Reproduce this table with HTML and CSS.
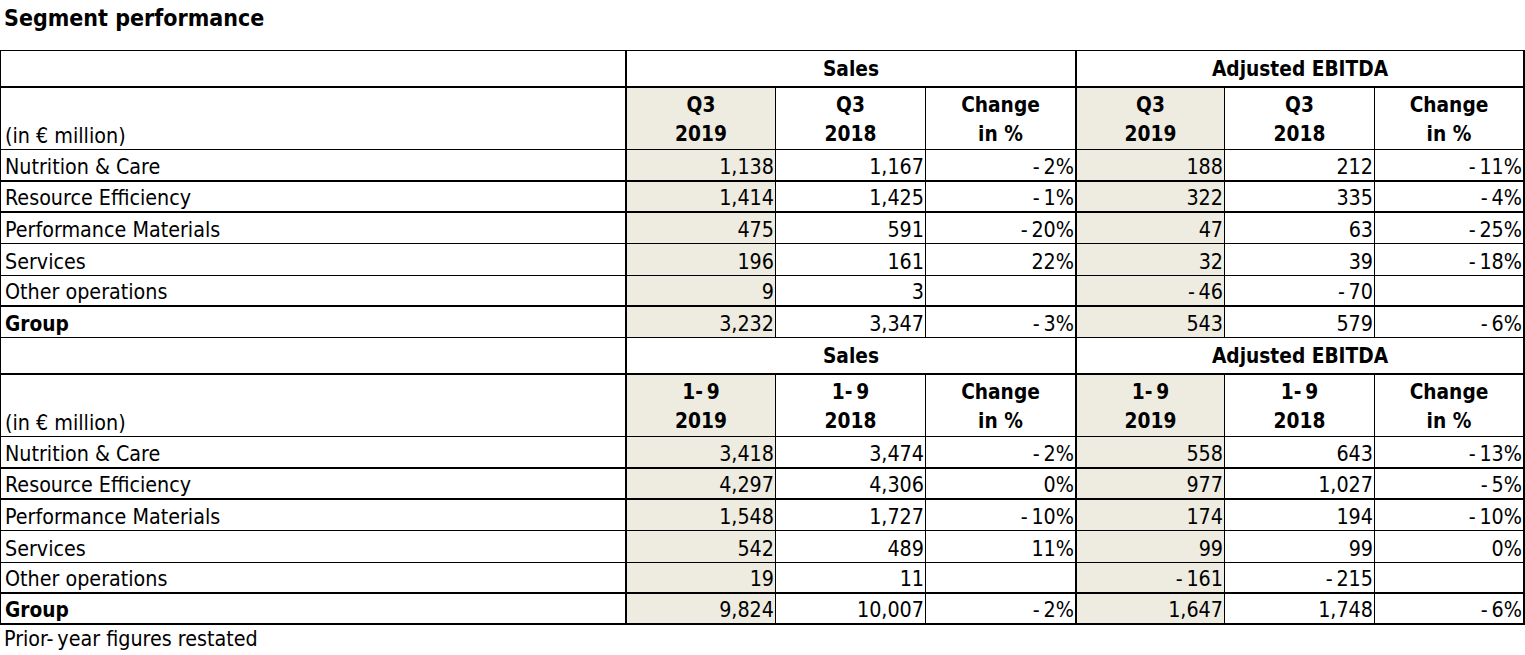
FILE: index.html
```html
<!DOCTYPE html>
<html lang="en">
<head>
<meta charset="utf-8">
<title>Segment performance</title>
<link rel="stylesheet" href="styles.css">
</head>
<body>
<h1 class="title">Segment performance</h1>
<div class="table">
  <div class="row h1 thick">
    <div class="c sep"></div>
    <div class="c sep span3 hd">Sales</div>
    <div class="c sep span3 hd">Adjusted EBITDA</div>
  </div>
  <div class="row h2">
    <div class="c sep lbl">(in € million)</div>
    <div class="c hd2 shade">Q3<br>2019</div>
    <div class="c hd2">Q3<br>2018</div>
    <div class="c sep hd2">Change<br>in %</div>
    <div class="c hd2 shade">Q3<br>2019</div>
    <div class="c hd2">Q3<br>2018</div>
    <div class="c sep hd2">Change<br>in %</div>
  </div>
  <div class="row d32 thick">
    <div class="c sep lbl">Nutrition &amp; Care</div>
    <div class="c num shade">1,138</div><div class="c num">1,167</div><div class="c sep num">-&#8201;2%</div>
    <div class="c num shade">188</div><div class="c num">212</div><div class="c sep num">-&#8201;11%</div>
  </div>
  <div class="row d thick">
    <div class="c sep lbl">Resource Efficiency</div>
    <div class="c num shade">1,414</div><div class="c num">1,425</div><div class="c sep num">-&#8201;1%</div>
    <div class="c num shade">322</div><div class="c num">335</div><div class="c sep num">-&#8201;4%</div>
  </div>
  <div class="row d">
    <div class="c sep lbl">Performance Materials</div>
    <div class="c num shade">475</div><div class="c num">591</div><div class="c sep num">-&#8201;20%</div>
    <div class="c num shade">47</div><div class="c num">63</div><div class="c sep num">-&#8201;25%</div>
  </div>
  <div class="row d32">
    <div class="c sep lbl">Services</div>
    <div class="c num shade">196</div><div class="c num">161</div><div class="c sep num">22%</div>
    <div class="c num shade">32</div><div class="c num">39</div><div class="c sep num">-&#8201;18%</div>
  </div>
  <div class="row d thick">
    <div class="c sep lbl">Other operations</div>
    <div class="c num shade">9</div><div class="c num">3</div><div class="c sep num"></div>
    <div class="c num shade">-&#8201;46</div><div class="c num">-&#8201;70</div><div class="c sep num"></div>
  </div>
  <div class="row d">
    <div class="c sep lbl strong">Group</div>
    <div class="c num shade">3,232</div><div class="c num">3,347</div><div class="c sep num">-&#8201;3%</div>
    <div class="c num shade">543</div><div class="c num">579</div><div class="c sep num">-&#8201;6%</div>
  </div>

  <div class="row h1 thick">
    <div class="c sep"></div>
    <div class="c sep span3 hd">Sales</div>
    <div class="c sep span3 hd">Adjusted EBITDA</div>
  </div>
  <div class="row h2">
    <div class="c sep lbl">(in € million)</div>
    <div class="c hd2 shade">1-&#8201;9<br>2019</div>
    <div class="c hd2">1-&#8201;9<br>2018</div>
    <div class="c sep hd2">Change<br>in %</div>
    <div class="c hd2 shade">1-&#8201;9<br>2019</div>
    <div class="c hd2">1-&#8201;9<br>2018</div>
    <div class="c sep hd2">Change<br>in %</div>
  </div>
  <div class="row d32 thick">
    <div class="c sep lbl">Nutrition &amp; Care</div>
    <div class="c num shade">3,418</div><div class="c num">3,474</div><div class="c sep num">-&#8201;2%</div>
    <div class="c num shade">558</div><div class="c num">643</div><div class="c sep num">-&#8201;13%</div>
  </div>
  <div class="row d thick">
    <div class="c sep lbl">Resource Efficiency</div>
    <div class="c num shade">4,297</div><div class="c num">4,306</div><div class="c sep num">0%</div>
    <div class="c num shade">977</div><div class="c num">1,027</div><div class="c sep num">-&#8201;5%</div>
  </div>
  <div class="row d">
    <div class="c sep lbl">Performance Materials</div>
    <div class="c num shade">1,548</div><div class="c num">1,727</div><div class="c sep num">-&#8201;10%</div>
    <div class="c num shade">174</div><div class="c num">194</div><div class="c sep num">-&#8201;10%</div>
  </div>
  <div class="row d32">
    <div class="c sep lbl">Services</div>
    <div class="c num shade">542</div><div class="c num">489</div><div class="c sep num">11%</div>
    <div class="c num shade">99</div><div class="c num">99</div><div class="c sep num">0%</div>
  </div>
  <div class="row d thick">
    <div class="c sep lbl">Other operations</div>
    <div class="c num shade">19</div><div class="c num">11</div><div class="c sep num"></div>
    <div class="c num shade">-&#8201;161</div><div class="c num">-&#8201;215</div><div class="c sep num"></div>
  </div>
  <div class="row d thick">
    <div class="c sep lbl strong">Group</div>
    <div class="c num shade">9,824</div><div class="c num">10,007</div><div class="c sep num">-&#8201;2%</div>
    <div class="c num shade">1,647</div><div class="c num">1,748</div><div class="c sep num">-&#8201;6%</div>
  </div>
</div>
<p class="note">Prior-&#8201;year figures restated</p>
</body>
</html>
```
FILE: styles.css
```css
html, body {
  margin: 0;
  padding: 0;
  background: #ffffff;
}
body {
  font-family: "DejaVu Sans Condensed", "DejaVu Sans", Verdana, sans-serif;
  font-stretch: condensed;
  font-size: 21.3px;
  color: #000000;
  overflow: hidden;
}
.title {
  box-sizing: border-box;
  height: 50px;
  margin: 0;
  padding: 5px 0 0 4px;
  font-size: 23px;
  line-height: 27px;
  font-weight: bold;
}
.table {
  box-sizing: border-box;
  width: 1525px;
  border-top: 1px solid #000;
  border-left: 1px solid #000;
}
.row {
  display: grid;
  grid-template-columns: 626px 149px 150px 151px 148px 150px 150px;
}
.row.h1 { height: 37px; }
.row.h2 { height: 62px; }
.row.d { height: 31px; }
.row.d32 { height: 32px; }

.c {
  box-sizing: border-box;
  border-right: 1px solid #000;
  border-bottom: 1px solid #000;
  display: flex;
  align-items: flex-end;
  line-height: 23px;
  white-space: nowrap;
  min-width: 0;
}
.row.thick .c { border-bottom-width: 2px; }
.c.sep { border-right-width: 2px; }
.span3 { grid-column: span 3; }
.shade { background: #eeece1; }

.hd {
  align-items: center;
  justify-content: center;
  padding-top: 2px;
  font-weight: bold;
  font-size: 20.7px;
}
.hd2 {
  justify-content: center;
  text-align: center;
  font-weight: bold;
  font-size: 20.7px;
  line-height: 29px;
  padding-bottom: 0;
}
.lbl {
  padding: 0 0 2px 4px;
}
.lbl.strong {
  font-weight: bold;
  font-size: 20.7px;
  padding-bottom: 1px;
}
.num {
  justify-content: flex-end;
  padding: 0 1px 2px 0;
}
.note {
  margin: 0;
  padding: 2px 0 0 4px;
  line-height: 23px;
}
```
